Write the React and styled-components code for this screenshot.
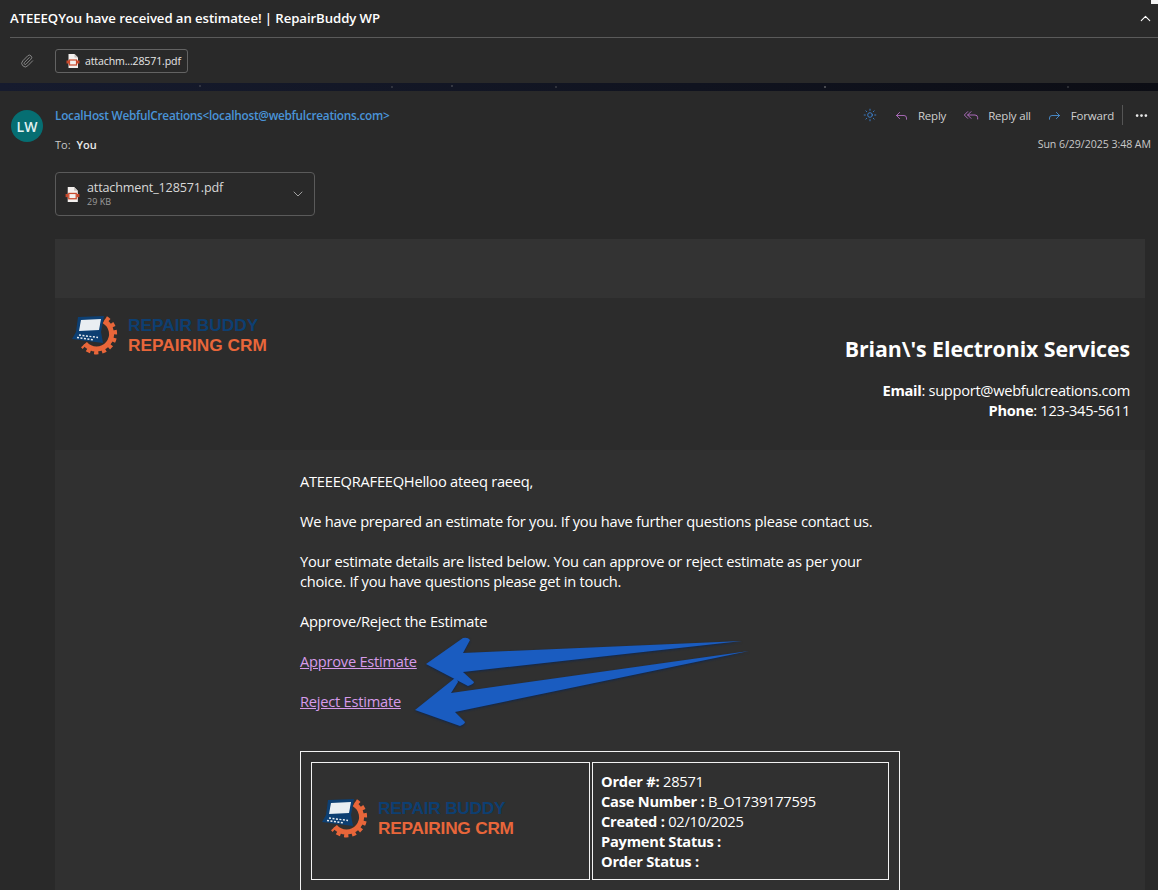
import styled, { createGlobalStyle } from "styled-components";
import { ChevronUp, ChevronDown, Paperclip, Sun, Reply, ReplyAll, Forward, MoreHorizontal } from "lucide-react";

const Global = createGlobalStyle`
  html, body { margin: 0; padding: 0; background: #292929; }
  body { font-family: "Open Sans", "Noto Sans", Arial, sans-serif; color: #fff; }
`;

const Page = styled.div`
  position: relative;
  width: 1158px;
  height: 890px;
  overflow: hidden;
  background: #292929;
`;

const CornerMark = styled.div`
  position: absolute;
  top: 0;
  right: 0;
  width: 7px;
  height: 4px;
  background: #f4f4f4;
`;

const SubjectBar = styled.div`
  height: 38px;
  margin-left: 10px;
  padding-right: 4px;
  box-sizing: border-box;
  border-bottom: 1px solid #5a5a5a;
  display: flex;
  align-items: center;
  justify-content: space-between;
  color: #fff;
`;

const Subject = styled.div`
  font-size: 13.2px;
  font-weight: 600;
  letter-spacing: -0.08px;
  margin-top: -1px;
`;

const AttachBar = styled.div`
  height: 45px;
  display: flex;
  align-items: center;
  padding-left: 20px;
  gap: 21px;
  color: #9a9a9a;
`;

const Chip = styled.div`
  height: 24px;
  width: 133px;
  box-sizing: border-box;
  border: 1px solid #636363;
  border-radius: 3px;
  display: flex;
  align-items: center;
  padding-left: 9px;
  gap: 4px;
  font-size: 10.6px;
  color: #e6e6e6;
  letter-spacing: -0.15px;
`;

const NightStrip = styled.div`
  height: 8px;
  background:
    radial-gradient(circle at 200px 3px, #777 0, transparent 1px),
    radial-gradient(circle at 392px 4px, #777 0, transparent 1px),
    radial-gradient(circle at 452px 3px, #888 0, transparent 1px),
    radial-gradient(circle at 556px 4px, #777 0, transparent 1px),
    radial-gradient(circle at 825px 4px, #999 0, transparent 1.2px),
    radial-gradient(circle at 1068px 4px, #777 0, transparent 1px),
    linear-gradient(90deg, #161b2e, #10131f 60%, #0c0d14);
`;

const Message = styled.div`
  display: flex;
  align-items: flex-start;
  padding: 19px 7px 0 11px;
  gap: 12px;
`;

const Avatar = styled.div`
  width: 32px;
  height: 32px;
  flex: none;
  border-radius: 50%;
  background: #066e72;
  display: flex;
  align-items: center;
  justify-content: center;
  font-size: 14px;
  font-weight: 600;
  color: #e2f2f2;
`;

const MessageMain = styled.div`
  flex: 1;
  min-width: 0;
  margin-top: -2px;
`;

const MetaRow = styled.div`
  display: flex;
  align-items: center;
  justify-content: space-between;
  height: 14px;
`;

const Sender = styled.div`
  font-size: 11.8px;
  font-weight: 600;
  color: #4a94d8;
  letter-spacing: -0.26px;
`;

const Actions = styled.div`
  display: flex;
  align-items: center;
  margin-right: 2px;
  font-size: 11.5px;
  color: #cfcfcf;
  letter-spacing: -0.2px;
`;

const Action = styled.div`
  display: flex;
  align-items: center;
  gap: 9px;
  margin-left: ${(p) => p.$gap}px;
`;

const Rule = styled.div`
  width: 1px;
  height: 20px;
  background: #555;
  margin: 0 11px 0 8px;
`;

const RecipientRow = styled(MetaRow)`
  margin-top: 15px;
  font-size: 11px;
  color: #c8c8c8;
`;

const You = styled.b`
  font-weight: 600;
  color: #e8e8e8;
  margin-left: 6px;
`;

const When = styled.div`
  font-size: 10.6px;
  color: #c8c8c8;
  letter-spacing: -0.05px;
`;

const FileCard = styled.div`
  width: 260px;
  height: 44px;
  margin-top: 21px;
  box-sizing: border-box;
  border: 1px solid #5a5a5a;
  border-radius: 4px;
  display: flex;
  align-items: center;
  padding: 0 8px;
  gap: 6px;
`;

const FileText = styled.div`
  flex: 1;
`;

const FileName = styled.div`
  font-size: 12.6px;
  line-height: 15px;
  color: #d8d8d8;
  letter-spacing: -0.15px;
`;

const FileSize = styled.div`
  font-size: 9px;
  line-height: 13px;
  color: #9c9c9c;
`;

const Mail = styled.div`
  width: 1090px;
  margin: 23px 0 0 55px;
  background: #303030;
`;

const TopBand = styled.div`
  height: 59px;
  background: #333333;
`;

const Brand = styled.div`
  height: 152px;
  box-sizing: border-box;
  background: #2c2c2c;
  display: flex;
  justify-content: space-between;
  align-items: flex-start;
  padding: 16px 15px 0 17px;
`;

const Company = styled.div`
  text-align: right;
  padding-top: 20px;
  font-size: 14.67px;
  line-height: 20px;
  letter-spacing: -0.3px;
`;

const CompanyName = styled.div`
  font-size: 21.33px;
  font-weight: 700;
  line-height: 30px;
  margin-bottom: 16px;
  letter-spacing: -0.08px;
`;

const Strong = styled.b`
  font-weight: 700;
`;

const Content = styled.div`
  position: relative;
  width: 600px;
  margin-left: 245px;
  padding-top: 21px;
  font-size: 14.67px;
  line-height: 20px;
  letter-spacing: -0.24px;
`;

const Para = styled.p`
  margin: 0 0 20px;
`;

const MailLink = styled.a`
  color: #d69bea;
  text-decoration: underline;
`;

const Arrows = styled.svg`
  position: absolute;
  left: 100px;
  top: 170px;
  filter: drop-shadow(0 1px 1px #10264a);
`;

const OrderTable = styled.div`
  border: 1px solid #f2f2f2;
  height: 200px;
  padding: 10px;
  display: grid;
  grid-template-columns: 279px 297px;
  grid-template-rows: 118px;
  gap: 2px;
  box-sizing: border-box;
  margin-top: 40px;
`;

const Cell = styled.div`
  border: 1px solid #f2f2f2;
  box-sizing: border-box;
  padding: ${(p) => p.$pad};
`;

const LogoWrap = styled.div`
  display: flex;
  align-items: center;
  gap: 9px;
  width: 200px;
`;

const LogoText = styled.div`
  font-family: "Liberation Sans", Arial, sans-serif;
  font-size: 17.3px;
  line-height: 20px;
  font-weight: 700;
  white-space: nowrap;
  padding-top: 1px;
`;

const LogoTop = styled.div`
  color: #0d3f72;
`;

const LogoBottom = styled.div`
  color: #e8663a;
`;

const PdfIcon = ({ size = 16 }) => (
  <svg width={size} height={size} viewBox="0 0 16 16">
    <path d="M3.5 1h6l3.500 3.500V15h-9.500z" fill="#f4f0ee" />
    <path d="M9.500 1v3.500H13z" fill="#c9c3c0" />
    <rect x="1.500" y="7.500" width="2.500" height="3" fill="#c8492c" />
    <rect x="12" y="7.500" width="2.500" height="3" fill="#c8492c" />
    <rect x="4.500" y="7" width="7" height="5" fill="none" stroke="#c8492c" strokeWidth="1.200" />
  </svg>
);

const Logo = () => (
  <LogoWrap>
    <svg width="47" height="40" viewBox="0 0 47 40">
      <g fill="none" stroke="#e8663a">
        <path d="M32 6A15 15 0 1 1 13 28.600" strokeWidth="5" />
        <path d="M33.700 3.400A18 18 0 1 1 10.900 30.600" strokeWidth="5" strokeDasharray="4 3.500" />
      </g>
      <path d="M6 2L32 1L29 17L31 28L0 24L4 17Z" fill="#0d3f72" />
      <path d="M9 5L29 4L27 15L7 16Z" fill="#e9eef2" />
      <path d="M7 20L26 22.500M5 22.500L22 25" stroke="#e9eef2" strokeWidth="1.500" strokeDasharray="2 1.500" />
    </svg>
    <LogoText>
      <LogoTop>REPAIR BUDDY</LogoTop>
      <LogoBottom>REPAIRING CRM</LogoBottom>
    </LogoText>
  </LogoWrap>
);

const App = () => (
  <Page>
    <Global />
    <CornerMark />
    <SubjectBar>
      <Subject>ATEEEQYou have received an estimatee! | RepairBuddy WP</Subject>
      <ChevronUp size={17} strokeWidth={1.5} />
    </SubjectBar>
    <AttachBar>
      <Paperclip size={14} strokeWidth={1.4} />
      <Chip>
        <PdfIcon />
        attachm...28571.pdf
      </Chip>
    </AttachBar>
    <NightStrip />
    <Message>
      <Avatar>LW</Avatar>
      <MessageMain>
        <MetaRow>
          <Sender>LocalHost WebfulCreations&lt;localhost@webfulcreations.com&gt;</Sender>
          <Actions>
            <Sun size={14} strokeWidth={1.4} color="#3f8ae0" />
            <Action $gap={17}>
              <Reply size={15} strokeWidth={1.4} color="#b46fc4" />
              Reply
            </Action>
            <Action $gap={17}>
              <ReplyAll size={16} strokeWidth={1.4} color="#b46fc4" />
              Reply all
            </Action>
            <Action $gap={16}>
              <Forward size={15} strokeWidth={1.4} color="#4a94d8" />
              Forward
            </Action>
            <Rule />
            <MoreHorizontal size={15} strokeWidth={2.4} color="#eee" />
          </Actions>
        </MetaRow>
        <RecipientRow>
          <span>
            To:<You>You</You>
          </span>
          <When>Sun 6/29/2025 3:48 AM</When>
        </RecipientRow>
        <FileCard>
          <PdfIcon size={17} />
          <FileText>
            <FileName>attachment_128571.pdf</FileName>
            <FileSize>29 KB</FileSize>
          </FileText>
          <ChevronDown size={16} strokeWidth={1.5} color="#a0a0a0" />
        </FileCard>
      </MessageMain>
    </Message>
    <Mail>
      <TopBand />
      <Brand>
        <Logo />
        <Company>
          <CompanyName>Brian\'s Electronix Services</CompanyName>
          <div>
            <Strong>Email</Strong>: support@webfulcreations.com
          </div>
          <div>
            <Strong>Phone</Strong>: 123-345-5611
          </div>
        </Company>
      </Brand>
      <Content>
        <Para>ATEEEQRAFEEQHelloo ateeq raeeq,</Para>
        <Para>We have prepared an estimate for you. If you have further questions please contact us.</Para>
        <Para>
          Your estimate details are listed below. You can approve or reject estimate as per your
          <br />
          choice. If you have questions please get in touch.
        </Para>
        <Para>Approve/Reject the Estimate</Para>
        <Para>
          <MailLink href="#">Approve Estimate</MailLink>
        </Para>
        <Para>
          <MailLink href="#">Reject Estimate</MailLink>
        </Para>
        <Arrows width="352" height="110" viewBox="0 0 352 110">
          <path d="M342 21L63 33L70 20Q68 17 63 18L26 44L68 66Q74 64 74 62L63 52Z" fill="#1a5cc0" />
          <path d="M349 31L51 73L58 62Q57 58 55 58L15 90L60 106Q65 104 65 102L55 92Z" fill="#1a5cc0" />
        </Arrows>
        <OrderTable>
          <Cell $pad="34px 0 0 10px">
            <Logo />
          </Cell>
          <Cell $pad="8px 8px">
            <div>
              <Strong>Order #:</Strong> 28571
            </div>
            <div>
              <Strong>Case Number :</Strong> B_O1739177595
            </div>
            <div>
              <Strong>Created :</Strong> 02/10/2025
            </div>
            <div>
              <Strong>Payment Status :</Strong>
            </div>
            <div>
              <Strong>Order Status :</Strong>
            </div>
          </Cell>
        </OrderTable>
      </Content>
    </Mail>
  </Page>
);

export default App;
